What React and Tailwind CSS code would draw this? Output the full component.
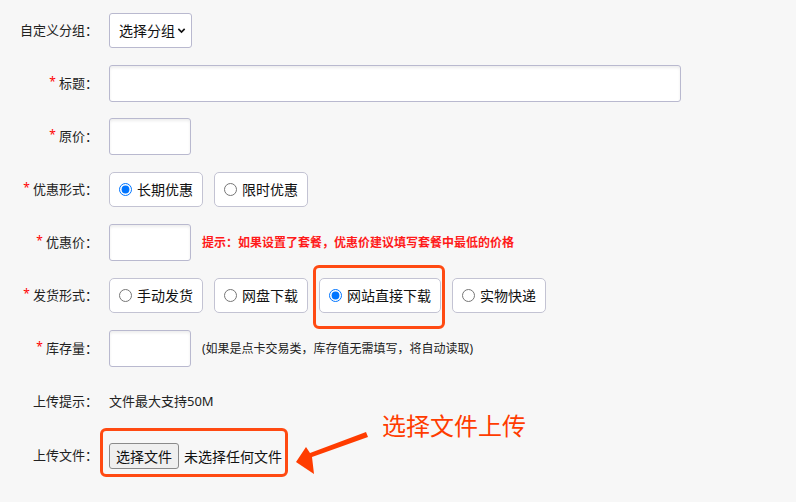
import React from 'react'

const FONT = { fontFamily: '"Noto Sans", "Noto Sans CJK SC", sans-serif' }

const inputCls = 'h-[37px] bg-white border border-[#b9b9cf] rounded-[3px] shadow-[inset_0_2px_3px_rgba(0,0,0,0.07)]'

function Label({ req, children }) {
  return (
    <div className="w-[98px] shrink-0 text-right text-[13px] text-[#222] mr-[11px] whitespace-nowrap">
      {req && <span className="text-[#ff0000] text-[12px] mr-[3px] relative top-[-2px]">*</span>}
      {children}：
    </div>
  )
}

function Radio({ label, checked, highlight }) {
  return (
    <div className="relative">
      <label className="h-[35px] flex items-center gap-[5px] pl-[9px] pr-[9px] bg-white border border-[#c3c3d3] rounded-[5px] text-[14px] text-[#111] whitespace-nowrap">
        <input type="radio" defaultChecked={checked} name={label} className="w-[13px] h-[13px] m-0" />
        {label}
      </label>
      {highlight && (
        <span className="absolute left-[-6px] right-[-4px] top-[-13px] bottom-[-16px] border-[3px] border-[#ff4a12] rounded-[6px] pointer-events-none" />
      )}
    </div>
  )
}

function Row({ children, className = '' }) {
  return <div className={`h-[53px] flex items-center ${className}`}>{children}</div>
}

export default function App() {
  return (
    <div className="w-[796px] h-[502px] bg-[#f7f7f7] pt-[4px] overflow-hidden" style={FONT}>
      {/* 分组 */}
      <Row>
        <Label>自定义分组</Label>
        <div className="h-[35px] w-[83px] bg-white border border-[#b9b9cf] rounded-[3px] flex items-center pl-[9px] text-[14px] text-[#111]">
          选择分组
          <svg width="9" height="9" viewBox="0 0 10 10" className="ml-[2px]">
            <path d="M1.5 3.2 L5 6.7 L8.5 3.2" fill="none" stroke="#111" strokeWidth="1.8" />
          </svg>
        </div>
      </Row>

      <Row>
        <Label req>标题</Label>
        <div className={`${inputCls} w-[572px]`} />
      </Row>

      <Row>
        <Label req>原价</Label>
        <div className={`${inputCls} w-[82px]`} />
      </Row>

      <Row>
        <Label req>优惠形式</Label>
        <div className="flex gap-[11px]">
          <Radio label="长期优惠" checked />
          <Radio label="限时优惠" />
        </div>
      </Row>

      <Row>
        <Label req>优惠价</Label>
        <div className={`${inputCls} w-[82px]`} />
        <span className="ml-[11px] text-[12px] font-bold text-[#ff1a1a]">
          提示：如果设置了套餐，优惠价建议填写套餐中最低的价格
        </span>
      </Row>

      <Row>
        <Label req>发货形式</Label>
        <div className="flex gap-[11px]">
          <Radio label="手动发货" />
          <Radio label="网盘下载" />
          <Radio label="网站直接下载" checked highlight />
          <Radio label="实物快递" />
        </div>
      </Row>

      <Row>
        <Label req>库存量</Label>
        <div className={`${inputCls} w-[82px]`} />
        <span className="ml-[11px] text-[12px] text-[#222]">
          (如果是点卡交易类，库存值无需填写，将自动读取)
        </span>
      </Row>

      <Row>
        <Label>上传提示</Label>
        <span className="text-[13px] text-[#222]">文件最大支持50M</span>
      </Row>

      <Row className="relative items-start pt-[18px]">
        <Label>上传文件</Label>
        <div className="relative flex items-center mt-[-3px]">
          <button className="h-[26px] px-[6px] bg-[#efefef] border border-[#8a8a8a] rounded-[3px] text-[14px] text-[#111]">
            选择文件
          </button>
          <span className="ml-[5px] text-[14px] text-[#111]">未选择任何文件</span>
          <span className="absolute left-[-9px] right-[-6px] top-[-15px] bottom-[-8px] border-[3px] border-[#ff4a12] rounded-[6px] pointer-events-none" />
        </div>
        <svg className="absolute left-[290px] top-[-2px]" width="90" height="60" viewBox="290 426 90 60">
          <polygon points="366,432 368,437 312,457 314,474 296,462 306,447 310,453" fill="#ff3c00" />
        </svg>
        <span className="absolute left-[382px] top-[-14px] text-[24px] text-[#ff3c00] leading-none">
          选择文件上传
        </span>
      </Row>
    </div>
  )
}
